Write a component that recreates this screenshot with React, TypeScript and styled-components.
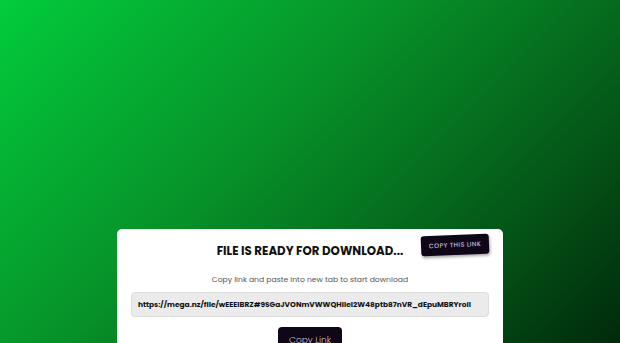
import React from 'react';
import styled, { createGlobalStyle } from 'styled-components';

const GlobalStyle = createGlobalStyle`
  html, body {
    margin: 0;
    padding: 0;
    height: 100%;
    overflow: hidden;
  }
  body {
    font-family: "Poppins", "Open Sans", "DejaVu Sans", sans-serif;
  }
`;

const Page = styled.div`
  width: 100vw;
  height: 100vh;
  background: linear-gradient(135deg, #02cc3c 0%, #079329 40%, #056a1d 65%, #012a0b 100%);
  display: flex;
  justify-content: center;
  padding-top: 229px;
  box-sizing: border-box;
`;

const Card = styled.div`
  position: relative;
  width: 386px;
  height: 160px;
  background: #ffffff;
  border-radius: 5px;
  box-sizing: border-box;
  padding: 13px 14px 0;
  display: flex;
  flex-direction: column;
  align-items: center;
`;

const Title = styled.h1`
  margin: 0;
  font-size: 11.8px;
  font-weight: 700;
  color: #111111;
  line-height: 18px;
`;

const Badge = styled.span`
  position: absolute;
  top: 6px;
  right: 14px;
  width: 68px;
  height: 20px;
  display: flex;
  align-items: center;
  justify-content: center;
  background: #0f0718;
  color: #e8e0f0;
  font-size: 6.2px;
  letter-spacing: 0.5px;
  border-radius: 3px;
  transform: rotate(-2.5deg);
  box-shadow: 1px 2px 3px rgba(0, 0, 0, 0.35);
`;

const Subtitle = styled.p`
  margin: 14px 0 0;
  font-size: 7.7px;
  color: #555555;
  line-height: 12px;
`;

const LinkField = styled.div`
  margin-top: 6px;
  align-self: stretch;
  height: 25px;
  background: #ebebeb;
  border: 1px solid #dddddd;
  border-radius: 4px;
  box-sizing: border-box;
  display: flex;
  align-items: center;
  padding-left: 6px;
  font-size: 7.45px;
  font-weight: 700;
  color: #111111;
  white-space: nowrap;
  overflow: hidden;
`;

const CopyButton = styled.button`
  margin-top: 10px;
  width: 64px;
  height: 26px;
  border: none;
  border-radius: 4px;
  background: #0f0718;
  color: #c9bcd8;
  font-family: inherit;
  font-size: 9px;
  font-weight: 300;
  padding: 0;
`;

export default function App() {
  return (
    <>
      <GlobalStyle />
      <Page>
        <Card>
          <Badge>COPY THIS LINK</Badge>
          <Title>FILE IS READY FOR DOWNLOAD...</Title>
          <Subtitle>Copy link and paste into new tab to start download</Subtitle>
          <LinkField>https://mega.nz/file/wEEElBRZ#9SGaJVONmVWWQHilel2W48ptb87nVR_dEpuMBRYroil</LinkField>
          <CopyButton>Copy Link</CopyButton>
        </Card>
      </Page>
    </>
  );
}
